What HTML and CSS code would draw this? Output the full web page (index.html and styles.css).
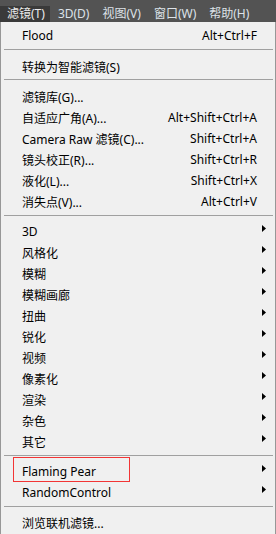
FILE: index.html
```html
<!DOCTYPE html>
<html>
<head>
<meta charset="utf-8">
<link rel="stylesheet" href="styles.css">
</head>
<body>
<div class="menubar">
  <div class="mb-item active">滤镜(T)</div>
  <div class="mb-item">3D(D)</div>
  <div class="mb-item">视图(V)</div>
  <div class="mb-item">窗口(W)</div>
  <div class="mb-item">帮助(H)</div>
</div>
<div class="menu">
  <div class="row"><span class="label">Flood</span><span class="shortcut">Alt+Ctrl+F</span></div>
  <div class="sep tall"></div>
  <div class="row"><span class="label">转换为智能滤镜(S)</span></div>
  <div class="sep tight"></div>
  <div class="row"><span class="label">滤镜库(G)...</span></div>
  <div class="row"><span class="label">自适应广角(A)...</span><span class="shortcut">Alt+Shift+Ctrl+A</span></div>
  <div class="row"><span class="label">Camera Raw 滤镜(C)...</span><span class="shortcut">Shift+Ctrl+A</span></div>
  <div class="row"><span class="label">镜头校正(R)...</span><span class="shortcut">Shift+Ctrl+R</span></div>
  <div class="row"><span class="label">液化(L)...</span><span class="shortcut">Shift+Ctrl+X</span></div>
  <div class="row"><span class="label">消失点(V)...</span><span class="shortcut">Alt+Ctrl+V</span></div>
  <div class="sep"></div>
  <div class="row"><span class="label">3D</span><svg class="arrow" width="4" height="7" viewBox="0 0 4 7"><polygon points="0,0 4,3.5 0,7" /></svg></div>
  <div class="row"><span class="label">风格化</span><svg class="arrow" width="4" height="7" viewBox="0 0 4 7"><polygon points="0,0 4,3.5 0,7" /></svg></div>
  <div class="row"><span class="label">模糊</span><svg class="arrow" width="4" height="7" viewBox="0 0 4 7"><polygon points="0,0 4,3.5 0,7" /></svg></div>
  <div class="row"><span class="label">模糊画廊</span><svg class="arrow" width="4" height="7" viewBox="0 0 4 7"><polygon points="0,0 4,3.5 0,7" /></svg></div>
  <div class="row"><span class="label">扭曲</span><svg class="arrow" width="4" height="7" viewBox="0 0 4 7"><polygon points="0,0 4,3.5 0,7" /></svg></div>
  <div class="row"><span class="label">锐化</span><svg class="arrow" width="4" height="7" viewBox="0 0 4 7"><polygon points="0,0 4,3.5 0,7" /></svg></div>
  <div class="row"><span class="label">视频</span><svg class="arrow" width="4" height="7" viewBox="0 0 4 7"><polygon points="0,0 4,3.5 0,7" /></svg></div>
  <div class="row"><span class="label">像素化</span><svg class="arrow" width="4" height="7" viewBox="0 0 4 7"><polygon points="0,0 4,3.5 0,7" /></svg></div>
  <div class="row"><span class="label">渲染</span><svg class="arrow" width="4" height="7" viewBox="0 0 4 7"><polygon points="0,0 4,3.5 0,7" /></svg></div>
  <div class="row"><span class="label">杂色</span><svg class="arrow" width="4" height="7" viewBox="0 0 4 7"><polygon points="0,0 4,3.5 0,7" /></svg></div>
  <div class="row"><span class="label">其它</span><svg class="arrow" width="4" height="7" viewBox="0 0 4 7"><polygon points="0,0 4,3.5 0,7" /></svg></div>
  <div class="sep"></div>
  <div class="row marked"><span class="label">Flaming Pear</span><svg class="arrow" width="4" height="7" viewBox="0 0 4 7"><polygon points="0,0 4,3.5 0,7" /></svg><span class="mark-box"></span></div>
  <div class="row"><span class="label">RandomControl</span><svg class="arrow" width="4" height="7" viewBox="0 0 4 7"><polygon points="0,0 4,3.5 0,7" /></svg></div>
  <div class="sep"></div>
  <div class="row"><span class="label">浏览联机滤镜...</span></div>
</div>
</body>
</html>
```

FILE: styles.css
```css
html, body {
  margin: 0;
  padding: 0;
}
body {
  width: 276px;
  height: 534px;
  overflow: hidden;
  background: #f0f0f0;
  font-family: "Noto Sans", "Noto Sans CJK SC", sans-serif;
  font-size: 12px;
  color: #000;
}
.menubar {
  height: 22px;
  background: #535353;
  display: flex;
  align-items: flex-end;
}
.mb-item {
  height: 16px;
  line-height: 16px;
  padding: 0 5px 0 7px;
  margin-right: 1px;
  color: #dde2e8;
  white-space: nowrap;
}
.mb-item.active {
  background: #3a3a3a;
  color: #ececec;
}
.menu {
  height: 512px;
  border-left: 1px solid #979797;
  border-right: 1px solid #979797;
  padding-top: 3px;
  box-sizing: border-box;
}
.row {
  position: relative;
  display: flex;
  align-items: center;
  height: 21px;
  padding-left: 21px;
  padding-right: 9px;
  white-space: nowrap;
}
.label {
  flex: 1;
}
.shortcut {
  margin-right: 9px;
}
.arrow {
  display: block;
  fill: #000;
  margin-top: -7px;
}
.sep {
  height: 9px;
  padding: 3px 2px 0 3px;
  box-sizing: border-box;
}
.sep.tall {
  height: 10px;
}
.sep.tight {
  padding-top: 2px;
}
.sep::before {
  content: "";
  display: block;
  border-top: 1px solid #a0a0a0;
}
.mark-box {
  position: absolute;
  left: 12px;
  top: -4px;
  width: 117px;
  height: 25px;
  box-sizing: border-box;
  border: 1px solid #f23535;
  pointer-events: none;
}
```
